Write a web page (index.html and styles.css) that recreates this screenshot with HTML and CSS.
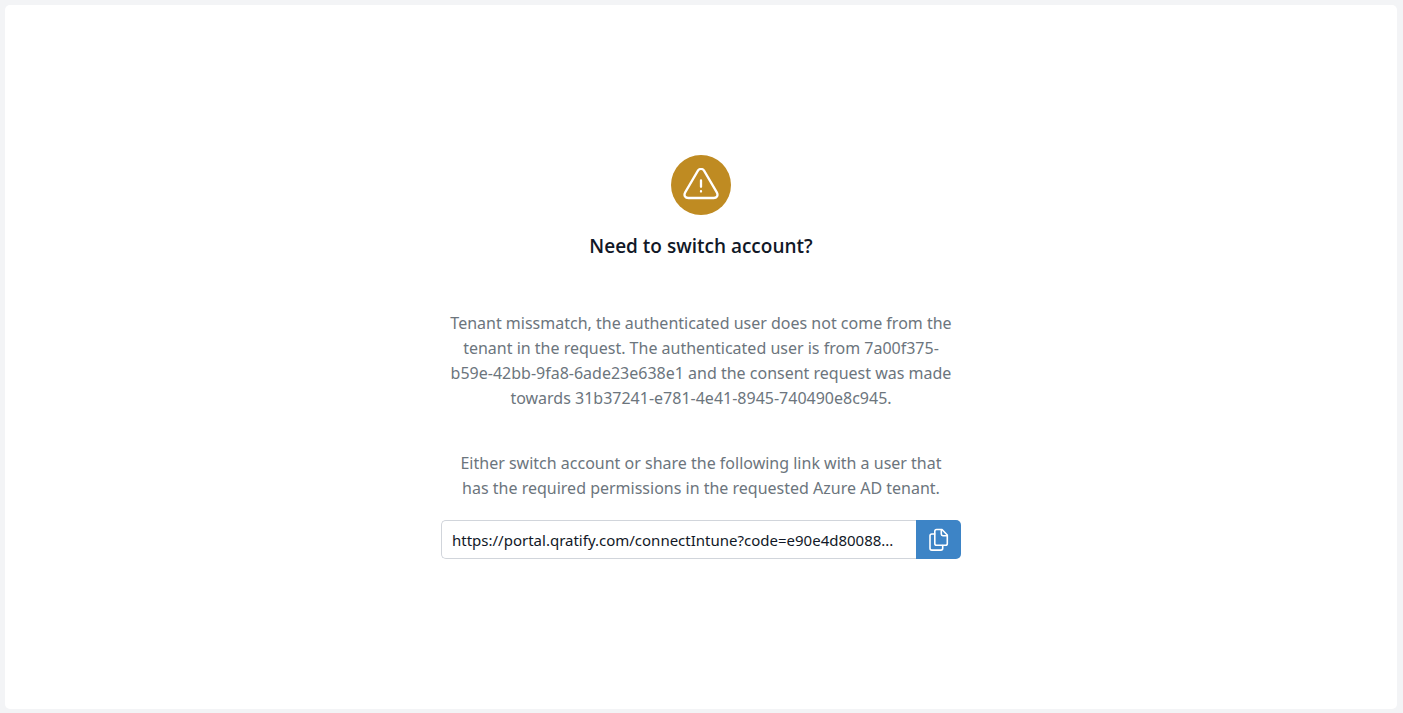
FILE: index.html
```
<!DOCTYPE html>
<html lang="en">
  <head>
    <meta charset="UTF-8" />
    <meta name="viewport" content="width=device-width, initial-scale=1" />
    <title>Need to switch account?</title>
    <link rel="stylesheet" href="styles.css">
  </head>
  <body>
    <main class="panel">
      <section class="message">
        <div class="message-icon">
          <svg viewBox="0 0 36 34" width="36" height="34" aria-hidden="true">
            <path d="M14.8 2.9 2.2 24.4C.5 27.4 2.2 30 5.4 30H30.6C33.8 30 35.5 27.4 33.8 24.4L21.2 2.9C19.7 .3 16.3 .3 14.8 2.9Z" />
            <path d="M18 12.5V18.8M18 23.2V23.6" />
          </svg>
        </div>
        <h1>Need to switch account?</h1>
        <p>
          Tenant missmatch, the authenticated user does not come from the<br />
          tenant in the request. The authenticated user is from 7a00f375-<br />b59e-42bb-9fa8-6ade23e638e1 and the consent request was made<br />
          towards 31b37241-e781-4e41-8945-740490e8c945.
        </p>
        <p>
          Either switch account or share the following link with a user that<br />
          has the required permissions in the requested Azure AD tenant.
        </p>
        <div class="copy-link">
          <input type="text" aria-label="Link to share" value="https://portal.qratify.com/connectIntune?code=e90e4d80088..." readonly />
          <button type="button" aria-label="Copy link">
            <svg viewBox="0 0 20 24" width="20" height="24" aria-hidden="true">
              <path d="M7.6 1.5H13L18.3 7V15.5C18.3 16.6 17.6 17.3 16.5 17.3H7.6C6.5 17.3 5.8 16.6 5.8 15.5V3.3C5.8 2.2 6.5 1.5 7.6 1.5Z" />
              <path d="M12.3 1.8V6.1C12.3 7.1 12.8 7.7 13.8 7.7H18.1" />
              <path d="M5.6 6H2.8C1.7 6 1 6.7 1 7.8V20.3C1 21.4 1.7 22.1 2.8 22.1H11.9C13 22.1 13.7 21.4 13.7 20.3V17.6" />
            </svg>
          </button>
        </div>
      </section>
    </main>
  </body>
</html>
```
FILE: styles.css
```
* {
  box-sizing: border-box;
  margin: 0;
  padding: 0;
}

body {
  display: flex;
  padding: 5px 6px 4px 5px;
  min-height: 100vh;
  font-family: "Segoe UI", "Noto Sans", sans-serif;
  font-size: 16px;
  line-height: 25px;
  color: #6c757d;
  background-color: #f3f4f6;
}

.panel {
  display: flex;
  flex: 1;
  align-items: center;
  justify-content: center;
  border-radius: 5px;
  background-color: #fff;
}

.message {
  display: flex;
  flex-direction: column;
  align-items: center;
  width: 100%;
  max-width: 520px;
  text-align: center;
}

.message-icon {
  display: flex;
  align-items: center;
  justify-content: center;
  width: 60px;
  height: 60px;
  border-radius: 50%;
  background-color: #bf8b22;
}

svg {
  fill: none;
  stroke: #fff;
  stroke-linecap: round;
  stroke-linejoin: round;
}

.message-icon svg {
  stroke-width: 2.3;
}

h1 {
  margin: 16px 0 25px;
  font-family: "Segoe UI", "Open Sans", sans-serif;
  font-size: 19px;
  font-weight: 600;
  line-height: 30px;
  color: #111827;
}

p {
  margin: 25px 0 15px;
}

.copy-link {
  display: flex;
  margin-top: 4px;
  width: 100%;
  height: 39px;
}

.copy-link input {
  flex: 1;
  min-width: 0;
  padding: 0 10px;
  border: 1px solid #d1d5db;
  border-right: 0;
  border-radius: 5px 0 0 5px;
  font-family: inherit;
  font-size: 15px;
  color: #111827;
  text-overflow: ellipsis;
}

.copy-link button {
  display: flex;
  align-items: center;
  justify-content: center;
  width: 45px;
  border: 0;
  border-radius: 0 5px 5px 0;
  background-color: #3d84c6;
  cursor: pointer;
}

.copy-link svg {
  stroke-width: 1.6;
}
```
